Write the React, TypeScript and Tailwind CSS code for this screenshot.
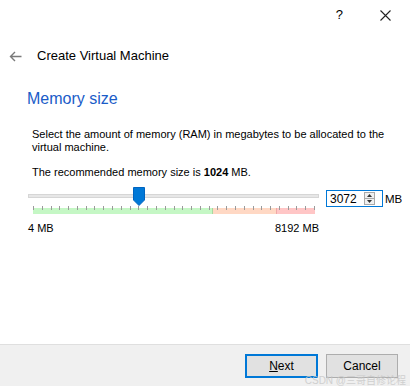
import React from 'react';

const ticks = Array.from({ length: 33 }, (_, i) => i);

const MemorySlider: React.FC<{ value: number; max: number }> = ({ value, max }) => {
  // bar spans 282px, thumb centred on value
  const pos = 5 + (282 * (value - 4)) / (max - 4);
  return (
    <div className="relative w-[291px] h-[26px]">
      <div className="absolute left-0 right-0 top-[6px] h-[4px] bg-[#e7e7e7] border border-[#d6d6d6]" />
      <div className="absolute left-[5px] top-[20px] w-[282px] h-[6px] flex">
        <div className="w-[179px] bg-[#c5f7c5]" />
        <div className="w-[64px] bg-[#ffd8c4] border-l border-[#a8d8a0]" />
        <div className="flex-1 bg-[#ffc6c6] border-l border-[#f0a8a8]" />
      </div>
      <div className="absolute left-[5px] top-[18px] w-[282px] h-[4px]">
        {ticks.map((i) => (
          <div
            key={i}
            className="absolute top-0 w-px h-[4px] bg-[#9a9a9a]"
            style={{ left: `${(i * 281) / 32}px` }}
          />
        ))}
      </div>
      <svg
        className="absolute top-[-1px]"
        style={{ left: `${pos - 6}px` }}
        width="12"
        height="19"
        viewBox="0 0 12 19"
      >
        <path d="M0.5 0.5H11.5V13L6 18.5L0.5 13Z" fill="#0078d7" stroke="#0064c0" />
      </svg>
    </div>
  );
};

export default function App() {
  return (
    <div
      className="w-[410px] h-[386px] bg-white flex flex-col text-[#000] overflow-hidden"
      style={{ fontFamily: '"Liberation Sans", "Noto Sans CJK SC", sans-serif' }}
    >
      <div className="h-[30px] flex items-center justify-end">
        <span className="text-[13px] mr-[37px]">?</span>
        <svg className="mr-[19px]" width="11" height="11" viewBox="0 0 11 11">
          <path d="M0.5 0.5L10.5 10.5M10.5 0.5L0.5 10.5" stroke="#222" strokeWidth="1.1" />
        </svg>
      </div>

      <div className="h-[50px] pt-[2px] flex items-center pl-[9px]">
        <svg width="13" height="11" viewBox="0 0 13 11">
          <path d="M12.5 5.5H1.5M6 1L1.5 5.5L6 10" stroke="#7a7a7a" strokeWidth="1.4" fill="none" />
        </svg>
        <span className="ml-[15px] text-[13px]">Create Virtual Machine</span>
      </div>

      <div className="pl-[27px] h-[38px] flex items-center text-[16px] text-[#1a5cc8]">Memory size</div>

      <div className="pl-[32px] mt-[10px] text-[11px] leading-[13px] pr-[6px]">
        <p>Select the amount of memory (RAM) in megabytes to be allocated to the virtual machine.</p>
        <p className="mt-[12px]">
          The recommended memory size is <b>1024</b> MB.
        </p>
      </div>

      <div className="flex pl-[28px] mt-[9px]">
        <MemorySlider value={3072} max={8192} />
        <div className="ml-[7px] mt-[2px] w-[57px] h-[17px] border border-[#0078d7] flex items-center">
          <span className="ml-[3px] text-[12px] flex-1">3072</span>
          <div className="w-[11px] h-[13px] mr-[7px] border border-[#a9a9a9] bg-[#f0f0f0] flex flex-col">
            <div className="flex-1 flex items-center justify-center border-b border-[#a9a9a9]">
              <svg width="5" height="3" viewBox="0 0 5 3"><path d="M0 3L2.5 0L5 3Z" fill="#333" /></svg>
            </div>
            <div className="flex-1 flex items-center justify-center">
              <svg width="5" height="3" viewBox="0 0 5 3"><path d="M0 0L2.5 3L5 0Z" fill="#333" /></svg>
            </div>
          </div>
        </div>
        <span className="ml-[2px] mt-[3px] text-[11.5px]">MB</span>
      </div>

      <div className="flex justify-between w-[291px] ml-[28px] mt-[6px] text-[11px]">
        <span>4 MB</span>
        <span>8192 MB</span>
      </div>

      <div className="flex-1" />

      <div className="h-[42px] bg-[#f0f0f0] border-t border-[#dfdfdf] flex items-center justify-end pr-[12px] gap-[8px] relative">
        <button className="w-[73px] h-[24px] bg-[#e1e1e1] border-2 border-[#0078d7] text-[12px]">
          <span className="underline">N</span>ext
        </button>
        <button className="w-[72px] h-[24px] bg-[#e1e1e1] border border-[#adadad] text-[12px]">Cancel</button>
        <span className="absolute right-[4px] bottom-0 text-[10px] leading-[11px] text-[#c8c8c8] opacity-80">CSDN @三哥自修论程</span>
      </div>
    </div>
  );
}
